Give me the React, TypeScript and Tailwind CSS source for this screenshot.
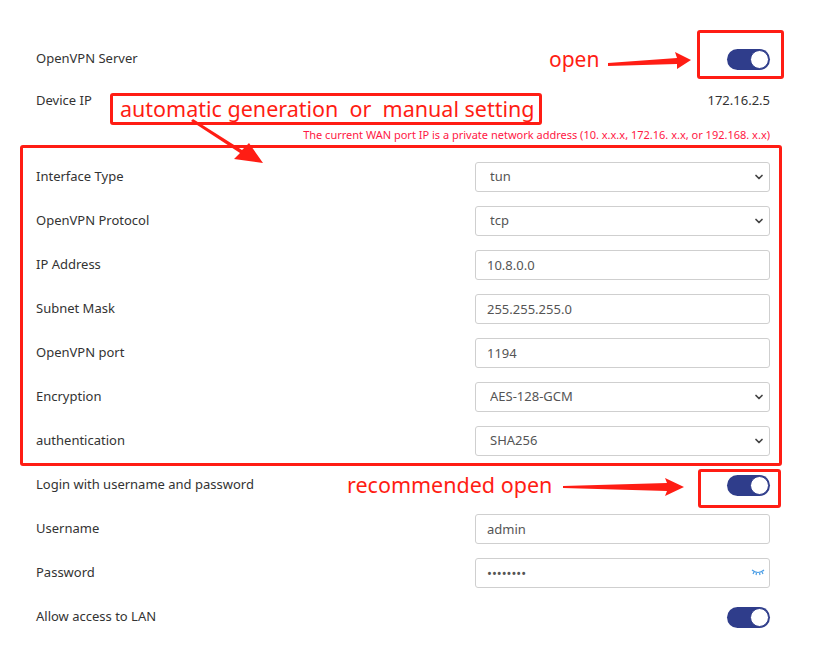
import React from 'react';
import { ChevronDown } from 'lucide-react';

const RED = '#ff1d14';

function Toggle() {
  return (
    <span className="relative inline-flex h-[21px] w-[43px] items-center rounded-full bg-[#2f3d8b]">
      <span className="absolute right-[1px] h-[19px] w-[19px] rounded-full border border-[#2f3d8b] bg-white" />
    </span>
  );
}

function TextInput({ value, type = 'text', eye = false }: { value: string; type?: string; eye?: boolean }) {
  return (
    <div className="relative w-[295px]">
      <input
        type={type}
        defaultValue={value}
        className="h-[30px] w-full rounded-[3px] border border-[#cfcfcf] bg-white pl-[11px] text-[13px] text-[#555] outline-none"
      />
      {eye && (
        <svg className="absolute right-[5px] top-[9px]" width="14" height="10" viewBox="0 0 14 10" fill="none" stroke="#4a9ee6" strokeWidth="1.2">
          <path d="M1 3 Q7 8 13 3" />
          <path d="M3 5 L2 7 M5.5 6 L5 8 M8.5 6 L9 8 M11 5 L12 7" />
        </svg>
      )}
    </div>
  );
}

function Select({ value }: { value: string }) {
  return (
    <div className="relative w-[295px]">
      <select
        defaultValue={value}
        className="h-[30px] w-full appearance-none rounded-[3px] border border-[#cfcfcf] bg-white pl-[14px] text-[13px] text-[#555] outline-none"
      >
        <option value={value}>{value}</option>
      </select>
      <ChevronDown className="pointer-events-none absolute right-[5px] top-[9px] text-[#444]" size={12} strokeWidth={3.5} />
    </div>
  );
}

function Row({ label, children }: { label: string; children?: React.ReactNode }) {
  return (
    <div className="flex h-[44px] items-center justify-between">
      <span className="text-[13px] text-[#333]">{label}</span>
      {children}
    </div>
  );
}

export default function App() {
  return (
    <div className="relative h-[646px] w-[816px] bg-white" style={{ fontFamily: '"Noto Sans", "Open Sans", sans-serif' }}>
      <div className="pl-[36px] pr-[46px] pt-[37px]">
        <Row label="OpenVPN Server">
          <Toggle />
        </Row>
        <div className="flex h-[40px] items-center justify-between">
          <span className="text-[13px] text-[#333]">Device IP</span>
          <span className="text-[13px] text-[#333]">172.16.2.5</span>
        </div>
        <div className="flex h-[34px] justify-end pt-[7px]">
          <span className="text-[11px] leading-[14px] text-[#ff1744]">
            The current WAN port IP is a private network address (10. x.x.x, 172.16. x.x, or 192.168. x.x)
          </span>
        </div>
        <Row label="Interface Type">
          <Select value="tun" />
        </Row>
        <Row label="OpenVPN Protocol">
          <Select value="tcp" />
        </Row>
        <Row label="IP Address">
          <TextInput value="10.8.0.0" />
        </Row>
        <Row label="Subnet Mask">
          <TextInput value="255.255.255.0" />
        </Row>
        <Row label="OpenVPN port">
          <TextInput value="1194" />
        </Row>
        <Row label="Encryption">
          <Select value="AES-128-GCM" />
        </Row>
        <Row label="authentication">
          <Select value="SHA256" />
        </Row>
        <Row label="Login with username and password">
          <Toggle />
        </Row>
        <Row label="Username">
          <TextInput value="admin" />
        </Row>
        <Row label="Password">
          <TextInput value="12345678" type="password" eye />
        </Row>
        <Row label="Allow access to LAN">
          <Toggle />
        </Row>
      </div>

      {/* annotations drawn over the page */}
      <div className="pointer-events-none absolute left-[697px] top-[30px] h-[49px] w-[87px] rounded-[3px] border-[3px] border-[#ff1d14]" />
      <div className="pointer-events-none absolute left-[110px] top-[93px] flex h-[32px] w-[432px] items-center rounded-[3px] border-[3px] border-[#ff1d14] pl-[7px]">
        <span className="whitespace-pre text-[21.5px] leading-none text-[#ff1d14]">automatic generation  or  manual setting</span>
      </div>
      <div className="pointer-events-none absolute left-[20px] top-[145px] h-[321px] w-[762px] rounded-[3px] border-[3px] border-[#ff1d14]" />
      <div className="pointer-events-none absolute left-[698px] top-[469px] h-[39px] w-[83px] rounded-[3px] border-[3px] border-[#ff1d14]" />
      <span className="pointer-events-none absolute left-[549px] top-[49px] text-[21px] leading-none text-[#ff1d14]">open</span>
      <span className="pointer-events-none absolute left-[347px] top-[474px] text-[21.5px] leading-none text-[#ff1d14]">recommended open</span>
      <svg className="pointer-events-none absolute left-0 top-0" width="816" height="646">
        <polygon fill={RED} points="608,63 677,58 675,52 691,60 677,69 677,64 608,66" />
        <polygon fill={RED} points="563,486 667,483 665,478 684,487 665,496 667,491 563,488" />
        <polygon fill={RED} points="193,119 242,150 249,143 263,163 234,159 240,153 191,121" />
      </svg>
    </div>
  );
}
